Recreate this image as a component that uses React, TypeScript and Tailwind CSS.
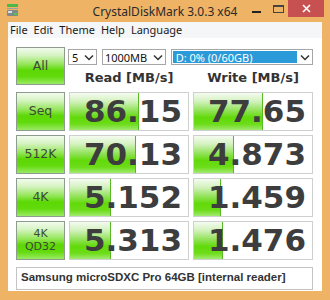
import React from "react";

const rows = [
  { label: "Seq", read: "86.15", write: "77.65", rw: 69, ww: 69 },
  { label: "512K", read: "70.13", write: "4.873", rw: 66, ww: 40 },
  { label: "4K", read: "5.152", write: "1.459", rw: 41, ww: 27 },
  { label: "4K\nQD32", read: "5.313", write: "1.476", rw: 41, ww: 29 },
];

const btnBg =
  "bg-[linear-gradient(to_bottom,#f2fbee_0%,#d6f4c2_20%,#94e65a_45%,#5cd804_62%,#62da0c_80%,#9aea64_100%)]";
const barBg =
  "bg-[linear-gradient(to_bottom,#f4fbf0_0%,#d4f2c0_22%,#90e256_48%,#62da0a_66%,#6cdc18_84%,#a2ea70_100%)]";

function Chevron() {
  return (
    <svg width="10" height="7" viewBox="0 0 10 7" className="shrink-0">
      <polyline points="1,1.5 5,5.5 9,1.5" fill="none" stroke="#333" strokeWidth="1.5" />
    </svg>
  );
}

function Btn({ label }: { label: string }) {
  const multi = label.includes("\n");
  return (
    <div
      className={`h-full w-full border border-[#8e9c8e] ${btnBg} flex flex-col items-center justify-center text-[#3b4a33] ${
        multi ? "text-[11px] leading-[13px]" : "text-[12.5px]"
      }`}
      style={{ fontFamily: '"DejaVu Sans", sans-serif' }}
    >
      {label.split("\n").map((l) => (
        <span key={l}>{l}</span>
      ))}
    </div>
  );
}

function Value({ v, w }: { v: string; w: number }) {
  return (
    <div className="relative h-full border border-[#cdd0cd] bg-white overflow-hidden">
      <div
        className={`absolute left-0 top-0 bottom-0 ${barBg} border-r border-[#58b824]`}
        style={{ width: w }}
      />
      <div
        className="relative h-full flex items-center justify-end pr-[6px] text-[31px] font-bold text-[#3d3d3d] leading-none"
        style={{ fontFamily: '"DejaVu Sans", Verdana, sans-serif' }}
      >
        {v}
      </div>
    </div>
  );
}

export default function App() {
  return (
    <div
      className="w-[330px] h-[300px] bg-[#efb366] flex flex-col overflow-hidden"
      style={{ fontFamily: '"Noto Sans", "Liberation Sans", sans-serif' }}
    >
      {/* title bar */}
      <div className="relative h-[22px] shrink-0 flex items-center justify-center">
        <svg width="11" height="13" viewBox="0 0 11 13" className="absolute left-[7px] top-[4px]">
          <rect x="0" y="0" width="11" height="3" fill="#4cb84c" />
          <rect x="0" y="4" width="11" height="1" fill="#9aa0a0" />
          <rect x="0" y="6" width="11" height="6" rx="1" fill="#7f8a8a" />
          <rect x="1" y="7" width="4" height="2" fill="#d8e0e0" />
          <rect x="7" y="9" width="3" height="2" fill="#55c455" />
        </svg>
        <span className="text-[12px] text-[#2a2a2a] mt-[1px]">CrystalDiskMark 3.0.3 x64</span>
        <div className="absolute left-[252px] top-[11px] w-[9px] h-[2px] bg-[#222]" />
        <div className="absolute left-[273px] top-[5px] w-[11px] h-[8px] border border-t-2 border-[#444]" />
        <div className="absolute left-[288px] top-0 w-[36px] h-[17px] bg-[#c75050] flex items-center justify-center">
          <svg width="9" height="9" viewBox="0 0 9 9">
            <path d="M1 1L8 8M8 1L1 8" stroke="#fff" strokeWidth="1.6" />
          </svg>
        </div>
      </div>

      {/* client */}
      <div className="mx-[8px] mb-[9px] flex-1 bg-white flex flex-col">
        <div className="h-[16px] bg-[#f5f6f7] flex items-center gap-[6px] pl-[2px] text-[11px] text-[#1a1a1a]">
          <span>File</span>
          <span>Edit</span>
          <span>Theme</span>
          <span>Help</span>
          <span>Language</span>
        </div>

        <div className="pl-[8px] pt-[9px] flex flex-col">
          <div className="grid grid-cols-[49px_120px_120px] gap-[4px]">
            <div className="h-[38px]">
              <Btn label="All" />
            </div>
            <div className="col-span-2 flex flex-col">
              <div className="flex gap-[5px] ml-[-1px] mt-[2px] h-[16px] text-[11px] text-[#111]">
                <div className="w-[29px] border border-[#a6a6a6] flex items-center justify-between pl-[3px] pr-[2px]">
                  <span className="leading-none">5</span>
                  <Chevron />
                </div>
                <div className="w-[64px] border border-[#a6a6a6] flex items-center justify-between pl-[2px] pr-[2px]">
                  <span className="leading-none">1000MB</span>
                  <Chevron />
                </div>
                <div className="w-[143px] border border-[#a6a6a6] flex items-stretch">
                  <div className="flex-1 bg-[#2b9ad8] text-white flex items-center pl-[3px] m-[1px]">
                    <span className="leading-none">D: 0% (0/60GB)</span>
                  </div>
                  <div className="w-[14px] flex items-center justify-center">
                    <Chevron />
                  </div>
                </div>
              </div>
              <div
                className="flex-1 grid grid-cols-2 gap-[4px] items-center pt-[3px] text-[13px] font-bold text-[#333]"
                style={{ fontFamily: '"DejaVu Sans", Verdana, sans-serif' }}
              >
                <div className="text-center">Read [MB/s]</div>
                <div className="text-center">Write [MB/s]</div>
              </div>
            </div>

            {rows.map((r) => (
              <React.Fragment key={r.label}>
                <div className="h-[39px]">
                  <Btn label={r.label} />
                </div>
                <div className="h-[39px]">
                  <Value v={r.read} w={r.rw} />
                </div>
                <div className="h-[39px]">
                  <Value v={r.write} w={r.ww} />
                </div>
              </React.Fragment>
            ))}
          </div>

          <div
            className="mt-[7px] w-[297px] h-[23px] border border-[#c4c4c4] flex items-center pl-[4px] text-[11.5px] font-bold text-[#333] whitespace-nowrap overflow-hidden"
            style={{ fontFamily: '"Liberation Sans", Arial, sans-serif' }}
          >
            Samsung microSDXC Pro 64GB [internal reader]
          </div>
        </div>
      </div>
    </div>
  );
}
